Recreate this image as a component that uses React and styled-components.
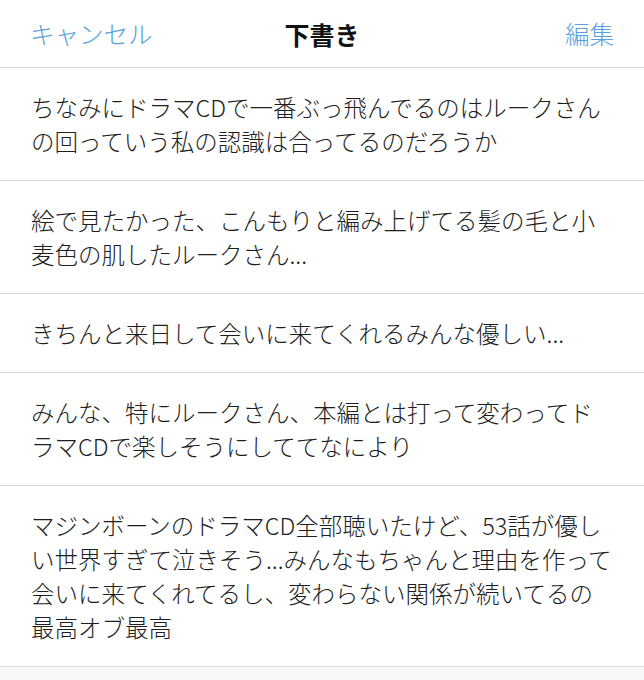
import React from 'react';
import styled, { createGlobalStyle } from 'styled-components';

const GlobalStyle = createGlobalStyle`
  html, body {
    margin: 0;
    padding: 0;
    background: #f7f7f9;
  }
  body {
    font-family: "Noto Sans CJK JP", "Noto Sans", sans-serif;
    -webkit-font-smoothing: antialiased;
  }
`;

const Page = styled.div`
  width: 644px;
  min-height: 680px;
  background: #f7f7f9;
`;

const NavBar = styled.header`
  display: grid;
  grid-template-columns: 1fr auto 1fr;
  align-items: center;
  height: 67px;
  padding: 0 30px;
  background: #fff;
  border-bottom: 1px solid #dadada;
`;

const NavButton = styled.button`
  justify-self: ${(p) => (p.$right ? 'end' : 'start')};
  padding: 0;
  border: none;
  background: none;
  font-family: inherit;
  font-size: 24.5px;
  font-weight: 300;
  color: #5aa1dc;
  cursor: pointer;
`;

const Title = styled.h1`
  margin: 0;
  font-size: 25px;
  font-weight: 700;
  color: #111;
`;

const List = styled.ul`
  list-style: none;
  margin: 0;
  padding: 0;
  background: #fff;
`;

const Row = styled.li`
  padding: 22px 20px 22px 31px;
  border-bottom: 1px solid #dadada;
  font-size: 23.5px;
  font-weight: 300;
  line-height: 34px;
  color: #1e1e1e;
`;

const Line = styled.span`
  display: block;
  white-space: nowrap;
`;

const drafts = [
  ['ちなみにドラマCDで一番ぶっ飛んでるのはルークさん', 'の回っていう私の認識は合ってるのだろうか'],
  ['絵で見たかった、こんもりと編み上げてる髪の毛と小', '麦色の肌したルークさん...'],
  ['きちんと来日して会いに来てくれるみんな優しい...'],
  ['みんな、特にルークさん、本編とは打って変わってド', 'ラマCDで楽しそうにしててなにより'],
  [
    'マジンボーンのドラマCD全部聴いたけど、53話が優し',
    'い世界すぎて泣きそう...みんなもちゃんと理由を作って',
    '会いに来てくれてるし、変わらない関係が続いてるの',
    '最高オブ最高',
  ],
];

export default function App() {
  return (
    <Page>
      <GlobalStyle />
      <NavBar>
        <NavButton>キャンセル</NavButton>
        <Title>下書き</Title>
        <NavButton $right>編集</NavButton>
      </NavBar>
      <List>
        {drafts.map((lines, i) => (
          <Row key={i}>
            {lines.map((l, j) => (
              <Line key={j}>{l}</Line>
            ))}
          </Row>
        ))}
      </List>
    </Page>
  );
}
